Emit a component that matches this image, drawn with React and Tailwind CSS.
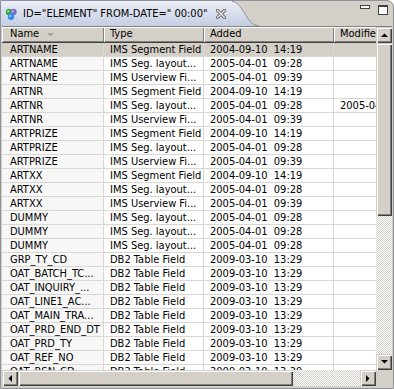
import React from "react";

const rows = [
  ["ARTNAME", "IMS Segment Field", "2004-09-10  14:19", ""],
  ["ARTNAME", "IMS Seg. layout...", "2005-04-01  09:28", ""],
  ["ARTNAME", "IMS Userview Fi...", "2005-04-01  09:39", ""],
  ["ARTNR", "IMS Segment Field", "2004-09-10  14:19", ""],
  ["ARTNR", "IMS Seg. layout...", "2005-04-01  09:28", "2005-04-01  09:28"],
  ["ARTNR", "IMS Userview Fi...", "2005-04-01  09:39", ""],
  ["ARTPRIZE", "IMS Segment Field", "2004-09-10  14:19", ""],
  ["ARTPRIZE", "IMS Seg. layout...", "2005-04-01  09:28", ""],
  ["ARTPRIZE", "IMS Userview Fi...", "2005-04-01  09:39", ""],
  ["ARTXX", "IMS Segment Field", "2004-09-10  14:19", ""],
  ["ARTXX", "IMS Seg. layout...", "2005-04-01  09:28", ""],
  ["ARTXX", "IMS Userview Fi...", "2005-04-01  09:39", ""],
  ["DUMMY", "IMS Seg. layout...", "2005-04-01  09:28", ""],
  ["DUMMY", "IMS Seg. layout...", "2005-04-01  09:28", ""],
  ["DUMMY", "IMS Seg. layout...", "2005-04-01  09:28", ""],
  ["GRP_TY_CD", "DB2 Table Field", "2009-03-10  13:29", ""],
  ["OAT_BATCH_TC...", "DB2 Table Field", "2009-03-10  13:29", ""],
  ["OAT_INQUIRY_...", "DB2 Table Field", "2009-03-10  13:29", ""],
  ["OAT_LINE1_AC...", "DB2 Table Field", "2009-03-10  13:29", ""],
  ["OAT_MAIN_TRA...", "DB2 Table Field", "2009-03-10  13:29", ""],
  ["OAT_PRD_END_DT", "DB2 Table Field", "2009-03-10  13:29", ""],
  ["OAT_PRD_TY", "DB2 Table Field", "2009-03-10  13:29", ""],
  ["OAT_REF_NO", "DB2 Table Field", "2009-03-10  13:29", ""],
  ["OAT_RSN_CD", "DB2 Table Field", "2009-03-10  13:29", ""],
];

function Arrow({ dir }) {
  const pts = {
    up: "0,4 7,4 3.5,0.5",
    down: "0,0 7,0 3.5,3.5",
    left: "4,0 4,7 0.5,3.5",
    right: "0,0 0,7 3.5,3.5",
  }[dir];
  const vertical = dir === "up" || dir === "down";
  return (
    <svg width={vertical ? 7 : 4} height={vertical ? 4 : 7} viewBox={vertical ? "0 0 7 4" : "0 0 4 7"}>
      <polygon points={pts} fill="#000" />
    </svg>
  );
}

function Btn({ dir, className = "" }) {
  return (
    <div
      className={
        "w-[16px] h-[16px] shrink-0 bg-[#d4d0c8] flex items-center justify-center shadow-[inset_1px_1px_#d4d0c8,inset_2px_2px_#ffffff,inset_-1px_-1px_#404040,inset_-2px_-2px_#808080] " +
        className
      }
    >
      <Arrow dir={dir} />
    </div>
  );
}

const thumb =
  "bg-[#d4d0c8] shadow-[inset_1px_1px_#d4d0c8,inset_2px_2px_#ffffff,inset_-1px_-1px_#404040,inset_-2px_-2px_#808080]";
const track =
  "[background-image:repeating-conic-gradient(#ffffff_0_25%,#d4d0c8_0_50%)] [background-size:2px_2px]";

export default function App() {
  return (
    <div className="w-[394px] h-[389px] bg-[#d4d0c8] border border-[#8f929c] rounded-tr-[7px] overflow-hidden flex flex-col text-[11px] text-black font-['DejaVu_Sans_Condensed','Liberation_Sans',sans-serif]">
      {/* tab strip */}
      <div className="h-[25px] shrink-0 flex">
        <div className="w-[231px] h-full flex items-center bg-gradient-to-b from-[#eceff6] to-[#c5cde3]">
          <svg width="16" height="16" viewBox="0 0 16 16" className="ml-[2px] mb-[1px]">
            <circle cx="6" cy="7" r="3.2" fill="#3aa83a" />
            <circle cx="10.5" cy="7" r="3.2" fill="#7c6cc4" />
            <circle cx="8" cy="11.8" r="3.2" fill="#2f8ee6" />
            <circle cx="5.2" cy="6.2" r="1" fill="#a8e8a8" />
            <circle cx="9.7" cy="6.2" r="1" fill="#c8c0f0" />
            <circle cx="7.2" cy="11" r="1" fill="#a8d8ff" />
          </svg>
          <span className="ml-[4px] whitespace-pre leading-[13px]">ID="ELEMENT" FROM-DATE=" 00:00"</span>
          <svg width="10" height="10" viewBox="0 0 10 10" className="ml-[9px]">
            <path d="M1.5 1.5 L8.5 8.5 M8.5 1.5 L1.5 8.5" stroke="#6e6e6e" strokeWidth="3.2" strokeLinecap="square" />
            <path d="M1.5 1.5 L8.5 8.5 M8.5 1.5 L1.5 8.5" stroke="#f2f2f2" strokeWidth="1.2" strokeLinecap="square" />
          </svg>
        </div>
        <svg width="26" height="25" viewBox="0 0 26 25" className="shrink-0">
          <defs>
            <linearGradient id="tabg" x1="0" y1="0" x2="0" y2="1">
              <stop offset="0" stopColor="#eceff6" />
              <stop offset="1" stopColor="#c5cde3" />
            </linearGradient>
          </defs>
          <path d="M0 0 C11 0 14 25 26 25 L0 25 Z" fill="url(#tabg)" />
          <path d="M0 0.5 C11 0.5 14 24.5 26 24.5" fill="none" stroke="#8f929c" strokeWidth="1" />
        </svg>
        <div className="flex-1 flex justify-end items-start pt-[4px] pr-[5px] gap-[8px]">
          <div className="w-[10px] h-[4px] border border-[#404040] bg-white" />
          <div className="w-[10px] h-[10px] border border-[#404040] border-t-2 bg-white" />
        </div>
      </div>

      {/* table */}
      <div className="h-[359px] shrink-0 mx-[1px] border-t border-[#808080] bg-white flex flex-col">
        <div className="h-[343px] flex">
          <div className="w-[374px] overflow-hidden flex flex-col">
            {/* header */}
            <div className="h-[16px] shrink-0 flex bg-[#d4d0c8] border-b border-[#404040]">
              <div className="w-[102px] shrink-0 relative pl-[8px] leading-[14px] shadow-[inset_1px_1px_#ffffff,inset_-1px_-1px_#808080]">
                Name
                <svg width="7" height="4" viewBox="0 0 7 4" className="absolute left-[45px] top-[6px]">
                  <polygon points="0,0 7,0 3.5,3.5" fill="#a3a3a3" />
                </svg>
              </div>
              <div className="w-[100px] shrink-0 pl-[6px] leading-[14px] shadow-[inset_1px_1px_#ffffff,inset_-1px_-1px_#808080]">Type</div>
              <div className="w-[130px] shrink-0 pl-[6px] leading-[14px] shadow-[inset_1px_1px_#ffffff,inset_-1px_-1px_#808080]">Added</div>
              <div className="w-[90px] shrink-0 pl-[6px] leading-[14px] shadow-[inset_1px_1px_#ffffff,inset_-1px_-1px_#808080]">Modified</div>
            </div>
            {/* body */}
            <div className="flex-1 overflow-hidden">
              {rows.map((r, i) => {
                const sel = i === 0;
                return (
                  <div key={i} className={"flex h-[14px] border-b border-[#d9d7d0] " + (sel ? "bg-[#d4d0c8]" : "")}>
                    <div className={"w-[102px] shrink-0 pl-[8px] leading-[13px] whitespace-pre overflow-hidden border-r border-[#d9d7d0] " + (sel ? "" : "bg-[#f7f7f7]")}>{r[0]}</div>
                    <div className="w-[100px] shrink-0 pl-[6px] leading-[13px] whitespace-pre overflow-hidden border-r border-[#d9d7d0]">{r[1]}</div>
                    <div className="w-[130px] shrink-0 pl-[6px] leading-[13px] whitespace-pre overflow-hidden border-r border-[#d9d7d0]">{r[2]}</div>
                    <div className="w-[90px] shrink-0 pl-[6px] leading-[13px] whitespace-pre overflow-hidden">{r[3]}</div>
                  </div>
                );
              })}
            </div>
          </div>
          {/* vertical scrollbar */}
          <div className="w-[16px] shrink-0 flex flex-col">
            <Btn dir="up" />
            <div className={"h-[173px] shrink-0 " + thumb} />
            <div className={"flex-1 " + track} />
            <Btn dir="down" />
          </div>
        </div>
        {/* horizontal scrollbar */}
        <div className="h-[16px] shrink-0 flex">
          <Btn dir="left" />
          <div className={"w-[275px] shrink-0 " + thumb} />
          <div className={"flex-1 " + track} />
          <Btn dir="right" />
          <div className="w-[16px] shrink-0 bg-[#d4d0c8]" />
        </div>
      </div>
    </div>
  );
}
